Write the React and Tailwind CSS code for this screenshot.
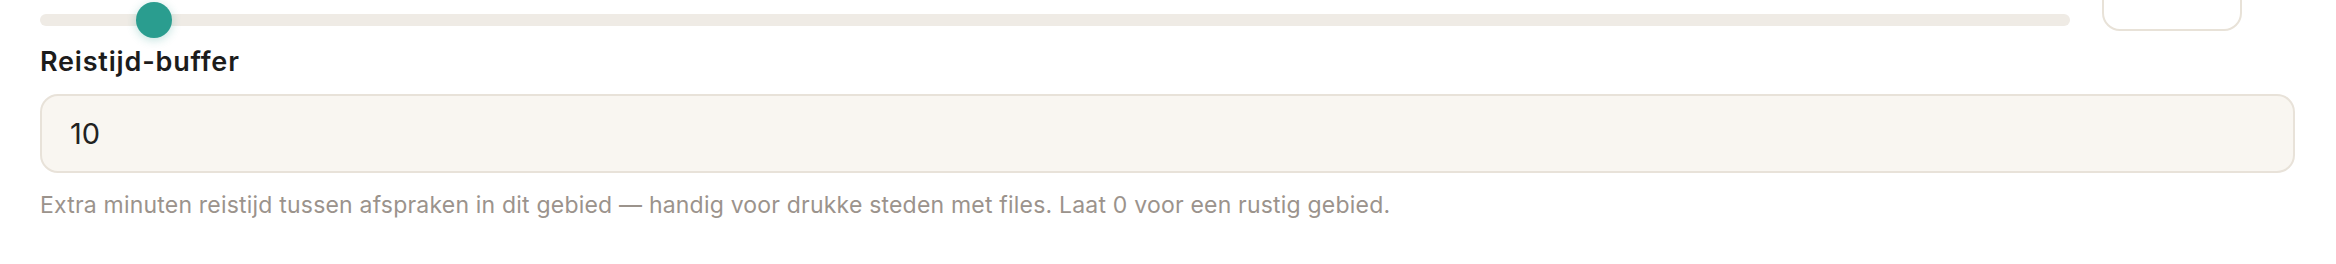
import React from "react";

const TravelBufferField = () => {
  return (
    <div className="w-full h-[264px] overflow-hidden bg-white font-['Inter','Noto_Sans',sans-serif]">
      <div className="pl-[40px] pr-[41px]">
        {/* slider row, top is scrolled out of view */}
        <div className="flex items-end -mt-[33px] pr-[53px]">
          <div className="relative flex-1 h-[12px] mb-[5px] rounded-full bg-[#efebe5]">
            <div className="absolute left-[96px] top-1/2 -translate-y-1/2 w-[36px] h-[36px] rounded-full bg-[#2a9d8f] shadow-[0_2px_10px_rgba(42,157,143,0.3)]" />
          </div>
          <div className="ml-[32px] w-[140px] h-[64px] rounded-[18px] border-2 border-[#e8e2d8] bg-white" />
        </div>

        <label className="block mt-[12px] text-[27px] leading-[37px] font-semibold text-[#1c1c1c] tracking-[0.03em]">
          Reistijd-buffer
        </label>

        <div className="mt-[14px] h-[79px] flex items-center pl-[28px] rounded-[18px] border-2 border-[#e8e2d9] bg-[#f9f6f1]">
          <span className="text-[29px] text-[#222222]">10</span>
        </div>

        <p className="mt-[16px] text-[23px] leading-[32px] tracking-[0.2px] text-[#9b938c]">
          Extra minuten reistijd tussen afspraken in dit gebied — handig voor drukke steden met files. Laat 0 voor een rustig gebied.
        </p>
      </div>
    </div>
  );
};

export default function App() {
  return <TravelBufferField />;
}
